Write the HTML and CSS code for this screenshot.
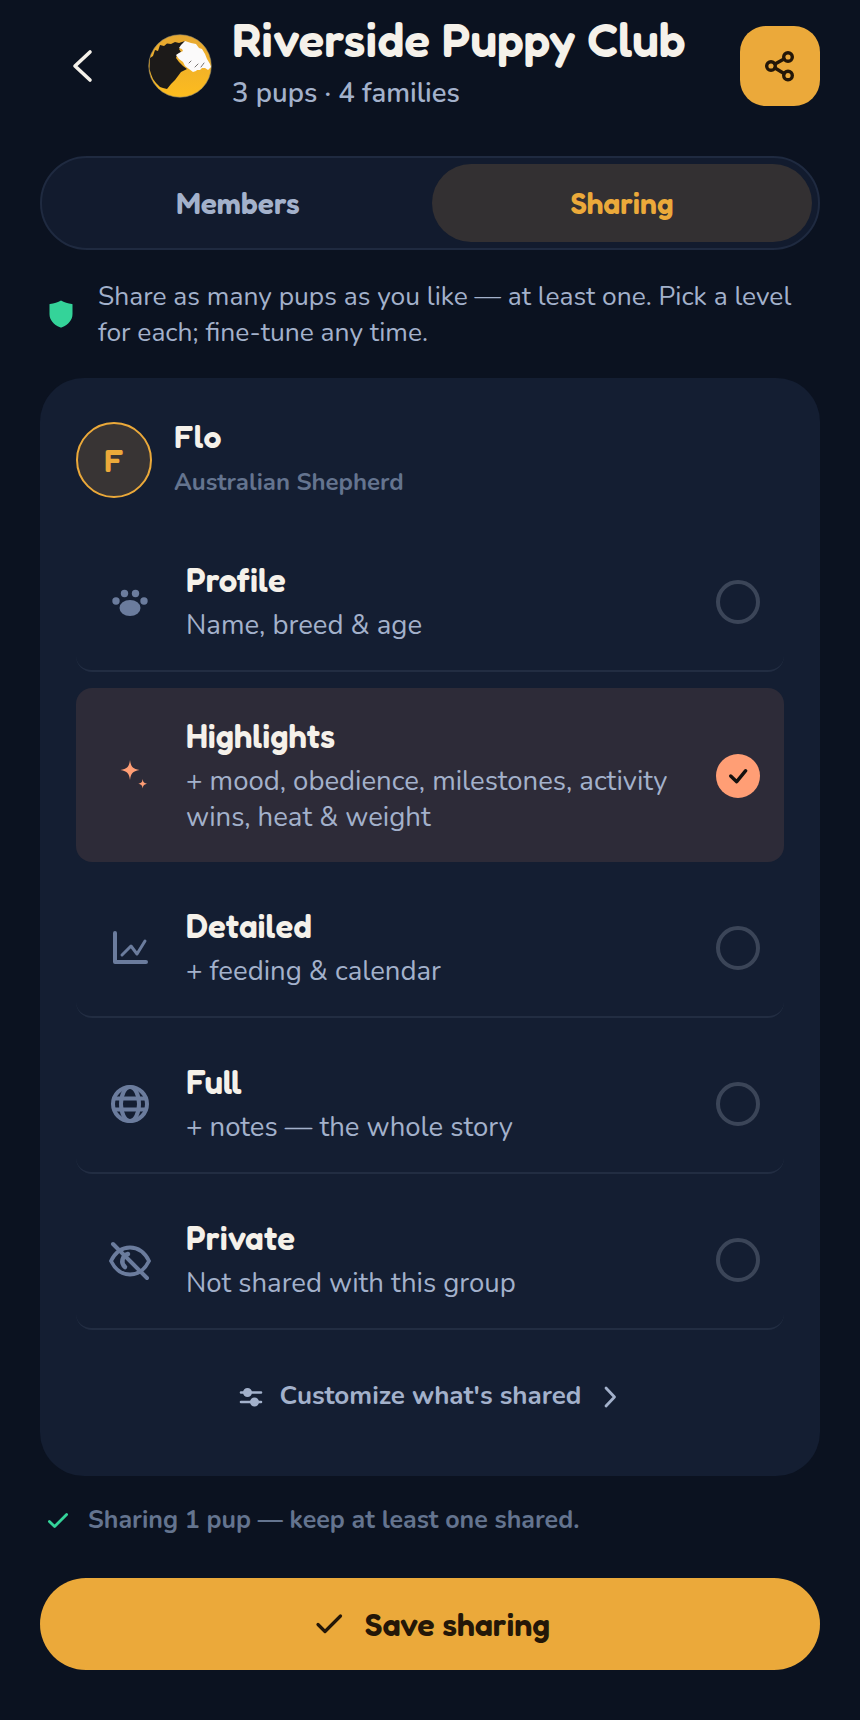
FILE: index.html
```html
<!DOCTYPE html>
<html lang="en">
<head>
<meta charset="utf-8">
<title>Riverside Puppy Club</title>
<link rel="stylesheet" href="styles.css">
</head>
<body>
<main class="page">
  <header class="header">
    <button class="back" aria-label="Back">
      <svg width="36" height="36" viewBox="0 0 36 36" fill="none" stroke="#f5f1ea" stroke-width="3.6" stroke-linecap="round" stroke-linejoin="round"><path d="M24 4 9 18l15 14"/></svg>
    </button>
    <svg class="logo" viewBox="0 0 64 64" aria-hidden="true">
      <defs><linearGradient id="lg" x1="0" y1="0" x2="0" y2="1"><stop offset="0" stop-color="#e6a832"/><stop offset="1" stop-color="#fdbc1e"/></linearGradient></defs>
      <circle cx="32" cy="32" r="31.300" fill="url(#lg)" stroke="#8f8468" stroke-width=".6"/>
      <path d="M1.500 35 2 24l3-2 2-6 3 1 2-6 4 1 3-2.500 4 .5 4-2 4 1 6-2-4 6-2 2 2 3-4 3-1 3 3 4 4 4 4 3-6 3-3 4-3 4-4 4-4 5-4-1-3-1-4-4-3-4-2-5Z" fill="#1c1a19"/>
      <path d="M37 7l6 2 5 1 3 4 3 1 3 5 2 5 3 5 1 3-3 3-3-2h-3l-2 2h-3l-1 1-3 1-4-3-4-3-2-4-4-3-3-4 3-2 4-2-1-2-3-1 2-3 2-2Z" fill="#fbfafa"/>
      <path d="M47 33l3-3M53 33l3-4M41 29l2-2" stroke="#55524f" stroke-width=".8" stroke-linecap="round"/>
    </svg>
    <div class="heading">
      <h1 class="club">Riverside Puppy Club</h1>
      <p class="meta">3 pups · 4 families</p>
    </div>
    <button class="share" aria-label="Share">
      <svg width="36" height="36" viewBox="0 0 36 36" fill="none" stroke="#241708" stroke-width="3.4" stroke-linecap="round"><circle cx="26" cy="9" r="4.3"/><circle cx="9" cy="18" r="4.3"/><circle cx="26" cy="27.500" r="4.3"/><path d="m13 16 9-5M13 20l9 5.500"/></svg>
    </button>
  </header>

  <nav class="tabs">
    <button class="tab">Members</button>
    <button class="tab tab-active">Sharing</button>
  </nav>

  <div class="info">
    <svg class="info-icon" viewBox="0 0 24 28" aria-hidden="true"><path d="M12 .5c3 1.800 7 3 11 3.600.5 0 .5.500.5 1V14c0 6-4 10.500-10.500 13.300-.6.300-1.400.300-2 0C4.500 24.500.5 20 .5 14V5.100c0-.5 0-1 .5-1C5 3.500 9 2.300 12 .5Z" fill="#34d399"/></svg>
    <p class="info-text">Share as many pups as you like — at least one. Pick a level for each; fine-tune any time.</p>
  </div>

  <section class="card">
    <div class="pup">
      <div class="avatar">F</div>
      <div class="pup-text">
        <h2 class="pup-name">Flo</h2>
        <p class="pup-breed">Australian Shepherd</p>
      </div>
    </div>

    <div class="levels">
      <div class="level">
        <span class="level-icon">
          <svg width="40" height="40" viewBox="0 0 40 40" fill="#6b7c9d"><ellipse cx="20" cy="26" rx="10.500" ry="8"/><circle cx="14.500" cy="11.500" r="3.700"/><circle cx="25.500" cy="11.500" r="3.700"/><circle cx="6" cy="19" r="3.700"/><circle cx="34" cy="19" r="3.700"/></svg>
        </span>
        <div class="level-text">
          <h3 class="level-title">Profile</h3>
          <p class="level-desc">Name, breed &amp; age</p>
        </div>
        <span class="radio"></span>
      </div>

      <div class="level level-on">
        <span class="level-icon">
          <svg width="40" height="40" viewBox="0 0 40 40" fill="#ff9e75"><path d="M20 4c1 7 2.500 8.500 9.500 10-7 1.500-8.500 3-9.500 10-1-7-2.500-8.500-9.500-10C17.500 12.500 19 11 20 4Z"/><path d="M32.700 23c.5 3.200 1 3.800 4.500 4.800-3.500 1-4 1.600-4.500 4.800-.5-3.200-1-3.800-4.500-4.800 3.500-1 4-1.600 4.500-4.800Z"/></svg>
        </span>
        <div class="level-text">
          <h3 class="level-title">Highlights</h3>
          <p class="level-desc">+ mood, obedience, milestones, activity wins, heat &amp; weight</p>
        </div>
        <span class="radio radio-on">
          <svg width="24" height="24" viewBox="0 0 24 24" fill="none" stroke="#14110f" stroke-width="3.400" stroke-linecap="round" stroke-linejoin="round"><path d="m4.700 12 6 5.700 9-11"/></svg>
        </span>
      </div>

      <div class="level">
        <span class="level-icon">
          <svg width="40" height="40" viewBox="0 0 40 40" fill="none" stroke="#6b7c9d" stroke-width="3" stroke-linecap="round" stroke-linejoin="round"><path d="M5 5v29h31" stroke-width="4"/><path d="m12 27 9-9 6 8 8-13"/></svg>
        </span>
        <div class="level-text">
          <h3 class="level-title">Detailed</h3>
          <p class="level-desc">+ feeding &amp; calendar</p>
        </div>
        <span class="radio"></span>
      </div>

      <div class="level">
        <span class="level-icon">
          <svg width="40" height="40" viewBox="0 0 40 40" fill="none" stroke="#6b7c9d" stroke-width="4"><circle cx="20" cy="20" r="17"/><ellipse cx="20" cy="20" rx="9" ry="17"/><path d="M3.500 14.500h33M3.500 25.500h33"/></svg>
        </span>
        <div class="level-text">
          <h3 class="level-title">Full</h3>
          <p class="level-desc">+ notes — the whole story</p>
        </div>
        <span class="radio"></span>
      </div>

      <div class="level">
        <span class="level-icon">
          <svg width="44" height="44" viewBox="0 0 44 44" fill="none" stroke="#6b7c9d" stroke-width="3.800" stroke-linecap="round"><path d="M3 23C8 13 14 9.500 22 9.500S36 13 41 23c-5 10-11 13.500-19 13.500S8 33 3 23Z"/><path d="M20 16a7.500 7.500 0 0 0-3 13" stroke-width="4.500"/><path d="M5 6l34 34" stroke-width="4"/></svg>
        </span>
        <div class="level-text">
          <h3 class="level-title">Private</h3>
          <p class="level-desc">Not shared with this group</p>
        </div>
        <span class="radio"></span>
      </div>
    </div>

    <button class="customize">
      <svg width="26" height="26" viewBox="0 0 26 26" fill="none" stroke="#a3b1cb" stroke-width="2.600" stroke-linecap="round"><path d="M3 8.500h20M3 18h20"/><circle cx="9.500" cy="8.500" r="3.200" fill="#a3b1cb"/><circle cx="16.500" cy="18" r="3.200" fill="#a3b1cb"/></svg>
      <span class="customize-label">Customize what's shared</span>
      <svg class="customize-chev" width="16" height="24" viewBox="0 0 16 24" fill="none" stroke="#a3b1cb" stroke-width="2.800" stroke-linecap="round" stroke-linejoin="round"><path d="m3 3 8.500 9L3 21"/></svg>
    </button>
  </section>

  <div class="note">
    <svg width="24" height="24" viewBox="0 0 24 24" fill="none" stroke="#34d399" stroke-width="2.800" stroke-linecap="round" stroke-linejoin="round"><path d="m3.400 13.500 5.200 5L20.600 6.500"/></svg>
    <span>Sharing 1 pup — keep at least one shared.</span>
  </div>

  <button class="save">
    <svg width="28" height="28" viewBox="0 0 28 28" fill="none" stroke="#241708" stroke-width="3.200" stroke-linecap="round" stroke-linejoin="round"><path d="m3 14.500 7 7L25.500 6"/></svg>
    <span>Save sharing</span>
  </button>
</main>
</body>
</html>
```

FILE: styles.css
```css
* { box-sizing: border-box; margin: 0; padding: 0; }
html, body { background: #0b1220; }
body { width: 860px; height: 1720px; overflow: hidden; font-family: "Nunito", "Lato", "Noto Sans", sans-serif; color: #a3b1cb; }
button { background: none; border: 0; font: inherit; color: inherit; }
.page { padding: 0 40px; display: flex; flex-direction: column; }

.header { display: flex; align-items: center; height: 132px; }
.back { width: 108px; display: flex; justify-content: flex-start; padding-left: 26px; }
.logo { width: 64px; height: 64px; flex: none; }
.heading { flex: 1; padding-left: 20px; margin-top: -8px; }
.club { font-family: "Fredoka", "Lato", sans-serif; font-weight: 600; font-size: 48px; line-height: 58px; margin-top: -3px; margin-bottom: 7px; color: #f5f1ea; white-space: nowrap; }
.meta { font-weight: 600; font-size: 27.5px; line-height: 36px; color: #a3b1cb; }
.share { width: 80px; height: 80px; border-radius: 26px; background: #eba93a; display: flex; align-items: center; justify-content: center; flex: none; }

.tabs { margin-top: 24px; height: 94px; border: 2px solid #1f2a40; border-radius: 47px; background: #121b2e; padding: 6px; display: flex; gap: 4px; }
.tab { flex: 1 1 0; border-radius: 40px; font-family: "Fredoka", "Lato", sans-serif; font-weight: 600; font-size: 30px; color: #a3b1cb; }
.tab-active { background: #333032; color: #eba93a; }

.info { display: flex; align-items: center; gap: 25px; margin-top: 28px; padding-left: 9px; }
.info-icon { width: 24px; height: 28px; flex: none; }
.info-text { font-size: 26.4px; line-height: 36px; padding-right: 12px; color: #a3b1cb; }

.card { margin-top: 28px; height: 1098px; border-radius: 44px; background: #141e32; padding: 44px 36px 0; }
.pup { display: flex; gap: 22px; }
.avatar { width: 76px; height: 76px; border-radius: 50%; border: 2px solid #eba93a; background: #383434; color: #eba93a; display: flex; align-items: center; justify-content: center; font-family: "Fredoka", "Lato", sans-serif; font-weight: 600; font-size: 32px; flex: none; }
.pup-text { display: flex; flex-direction: column; }
.pup-name { font-family: "Fredoka", "Lato", sans-serif; font-weight: 600; font-size: 32px; line-height: 30px; color: #f5f1ea; }
.pup-breed { font-weight: 700; font-size: 24px; line-height: 32px; margin-top: 14px; color: #64748f; }

.levels { display: flex; flex-direction: column; gap: 16px; margin-top: 34px; }
.level { display: flex; align-items: center; padding: 26px 24px 24px 30px; border-bottom: 2px solid #222d42; border-radius: 16px; }
.level-on { background: #2d2b38; border-bottom: 0; }
.level-icon { width: 48px; height: 44px; display: flex; align-items: center; justify-content: center; flex: none; }
.level-text { flex: 1; padding-left: 32px; padding-right: 20px; margin-top: -3px; margin-bottom: 3px; }
.level-title { font-family: "Fredoka", "Lato", sans-serif; font-weight: 600; font-size: 33px; line-height: 52px; margin-top: -1px; margin-bottom: 1px; color: #f5f1ea; }
.level-desc { font-size: 27.5px; line-height: 36px; color: #a3b1cb; }
.radio { width: 44px; height: 44px; border-radius: 50%; border: 4px solid #3b4558; flex: none; display: flex; align-items: center; justify-content: center; }
.radio-on { border: 0; background: #ff9e75; }

.customize { display: flex; align-items: center; justify-content: center; width: 100%; height: 36px; margin-top: 49px; padding-right: 3px; font-weight: 700; font-size: 26px; color: #a3b1cb; }
.customize-label { margin-left: 16px; margin-bottom: 4px; }
.customize-chev { margin-left: 22px; }

.note { display: flex; align-items: center; gap: 18px; margin-top: 27px; padding-left: 6px; font-weight: 700; font-size: 25px; line-height: 34px; color: #64748f; }

.save { margin-top: 41px; height: 92px; padding-left: 5px; border-radius: 46px; background: #eba93a; color: #241708; display: flex; align-items: center; justify-content: center; gap: 22px; font-family: "Fredoka", "Lato", sans-serif; font-weight: 600; font-size: 32.2px; }
```
